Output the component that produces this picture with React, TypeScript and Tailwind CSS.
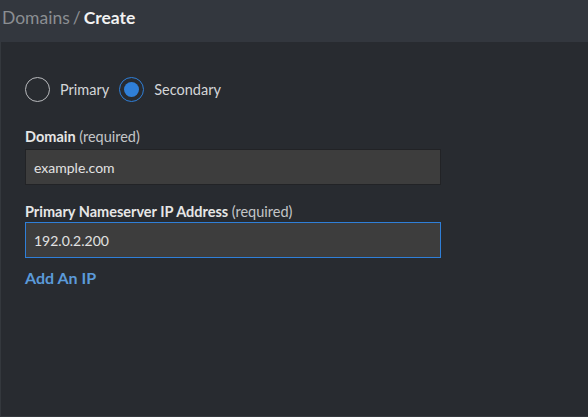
import React from "react";

function Radio({ checked, label }: { checked?: boolean; label: string }) {
  return (
    <label className="flex items-center">
      <span
        className={
          checked
            ? "flex h-[25px] w-[25px] items-center justify-center rounded-full border border-[#2f7fd8]"
            : "flex h-[25px] w-[25px] items-center justify-center rounded-full border border-[#b8babd]"
        }
      >
        {checked && <span className="h-[15px] w-[15px] rounded-full bg-[#2f7fd8]" />}
      </span>
      <span className="ml-[10px] text-[14.5px] text-[#d4d6d8]">{label}</span>
    </label>
  );
}

export default function App() {
  return (
    <main className="h-[417px] w-[588px] overflow-hidden bg-[#282b30] font-['Lato','Open_Sans',sans-serif]">
      <header className="flex h-[42px] items-center bg-[#33373e] pl-[2px] pb-[6px] text-[17.5px]">
        <span className="text-[#8b8e92]">Domains</span>
        <span className="ml-[3px] text-[#8b8e92]">/</span>
        <span className="ml-[3px] font-bold text-[#f2f2f2]">Create</span>
      </header>

      <section className="h-[375px] border-b border-l border-[#34383d] pl-[24px] pt-[35px]">
        <div className="flex items-center gap-[10px]">
          <Radio label="Primary" />
          <Radio checked label="Secondary" />
        </div>

        <div className="mt-[26px]">
          <p className="text-[14.5px] font-bold leading-[18px] text-[#e6e6e6]">
            Domain <span className="font-normal text-[#c4c6c8]">(required)</span>
          </p>
          <div className="mt-[3px] flex h-[36px] w-[416px] items-center border border-[#222326] bg-[#3d3d3d] pl-[8px] text-[14px] text-[#e2e2e2]">
            example.com
          </div>
        </div>

        <div className="mt-[18px]">
          <p className="text-[14.5px] font-bold leading-[18px] text-[#e6e6e6]">
            Primary Nameserver IP Address <span className="font-normal text-[#c4c6c8]">(required)</span>
          </p>
          <div className="mt-[1px] flex h-[36px] w-[416px] items-center border border-[#2f7fd8] bg-[#3d3d3d] pl-[8px] text-[14px] text-[#e2e2e2]">
            192.0.2.200
          </div>
        </div>

        <button className="mt-[8px] text-[16px] font-bold leading-[24px] text-[#5b9ad9]">Add An IP</button>
      </section>
    </main>
  );
}
